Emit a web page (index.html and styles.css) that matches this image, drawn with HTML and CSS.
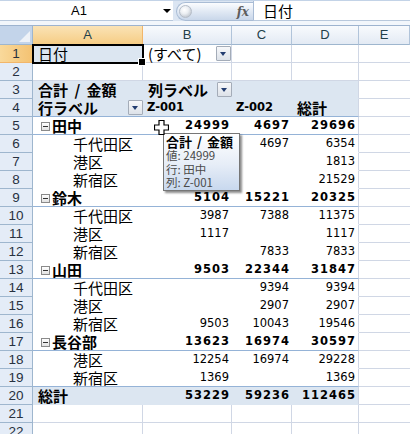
FILE: index.html
```html
<!DOCTYPE html>
<html lang="ja">
<head>
<meta charset="utf-8">
<title>Pivot</title>
<link rel="stylesheet" href="styles.css">
</head>
<body>
<div class="fbar">
  <div class="namebox"><span class="nb-text">A1</span><span class="nb-arrow"></span></div>
  <div class="pill"><span class="knob"></span><span class="fx">fx</span></div>
  <div class="formula">日付</div>
</div>
<div class="fstrip"></div>
<div class="sheet">
  <div class="row hdr">
    <div class="corner"><span class="tri"></span></div>
    <div class="ch sel">A</div><div class="ch">B</div><div class="ch">C</div><div class="ch">D</div><div class="ch">E</div>
  </div>
  <div class="row">
    <div class="rh sel">1</div>
    <div class="g t page a1">日付</div>
    <div class="g t fl">(すべて)<span class="dd"></span></div>
    <div class="g"></div><div class="g"></div><div class="g e"></div>
  </div>
  <div class="row">
    <div class="rh">2</div>
    <div class="g"></div><div class="g"></div><div class="g"></div><div class="g"></div><div class="g e"></div>
  </div>
  <div class="row band">
    <div class="rh">3</div>
    <div class="pv t b ws">合計 / 金額</div>
    <div class="pv t b fl">列ラベル<span class="dd"></span></div>
    <div class="pv"></div><div class="pd"></div><div class="g e"></div>
  </div>
  <div class="row band gl">
    <div class="rh">4</div>
    <div class="pv t b fl">行ラベル<span class="dd"></span></div>
    <div class="pv t b lat">Z-001</div>
    <div class="pv t b lat">Z-002</div>
    <div class="pd t b">総計</div>
    <div class="g e"></div>
  </div>
  <div class="row gl">
    <div class="rh">5</div>
    <div class="pv grp b"><span class="tog"></span>田中</div>
    <div class="pv n b">24999</div><div class="pv n b">4697</div><div class="pd n b">29696</div><div class="g e"></div>
  </div>
  <div class="row">
    <div class="rh">6</div>
    <div class="pv sub">千代田区</div>
    <div class="pv n"></div><div class="pv n">4697</div><div class="pd n">6354</div><div class="g e"></div>
  </div>
  <div class="row">
    <div class="rh">7</div>
    <div class="pv sub">港区</div>
    <div class="pv n"></div><div class="pv n"></div><div class="pd n">1813</div><div class="g e"></div>
  </div>
  <div class="row">
    <div class="rh">8</div>
    <div class="pv sub">新宿区</div>
    <div class="pv n"></div><div class="pv n"></div><div class="pd n">21529</div><div class="g e"></div>
  </div>
  <div class="row gl">
    <div class="rh">9</div>
    <div class="pv grp b"><span class="tog"></span>鈴木</div>
    <div class="pv n b">5104</div><div class="pv n b">15221</div><div class="pd n b">20325</div><div class="g e"></div>
  </div>
  <div class="row">
    <div class="rh">10</div>
    <div class="pv sub">千代田区</div>
    <div class="pv n">3987</div><div class="pv n">7388</div><div class="pd n">11375</div><div class="g e"></div>
  </div>
  <div class="row">
    <div class="rh">11</div>
    <div class="pv sub">港区</div>
    <div class="pv n">1117</div><div class="pv n"></div><div class="pd n">1117</div><div class="g e"></div>
  </div>
  <div class="row">
    <div class="rh">12</div>
    <div class="pv sub">新宿区</div>
    <div class="pv n"></div><div class="pv n">7833</div><div class="pd n">7833</div><div class="g e"></div>
  </div>
  <div class="row gl">
    <div class="rh">13</div>
    <div class="pv grp b"><span class="tog"></span>山田</div>
    <div class="pv n b">9503</div><div class="pv n b">22344</div><div class="pd n b">31847</div><div class="g e"></div>
  </div>
  <div class="row">
    <div class="rh">14</div>
    <div class="pv sub">千代田区</div>
    <div class="pv n"></div><div class="pv n">9394</div><div class="pd n">9394</div><div class="g e"></div>
  </div>
  <div class="row">
    <div class="rh">15</div>
    <div class="pv sub">港区</div>
    <div class="pv n"></div><div class="pv n">2907</div><div class="pd n">2907</div><div class="g e"></div>
  </div>
  <div class="row">
    <div class="rh">16</div>
    <div class="pv sub">新宿区</div>
    <div class="pv n">9503</div><div class="pv n">10043</div><div class="pd n">19546</div><div class="g e"></div>
  </div>
  <div class="row gl">
    <div class="rh">17</div>
    <div class="pv grp b"><span class="tog"></span>長谷部</div>
    <div class="pv n b">13623</div><div class="pv n b">16974</div><div class="pd n b">30597</div><div class="g e"></div>
  </div>
  <div class="row">
    <div class="rh">18</div>
    <div class="pv sub">港区</div>
    <div class="pv n">12254</div><div class="pv n">16974</div><div class="pd n">29228</div><div class="g e"></div>
  </div>
  <div class="row gl">
    <div class="rh">19</div>
    <div class="pv sub">新宿区</div>
    <div class="pv n">1369</div><div class="pv n"></div><div class="pd n">1369</div><div class="g e"></div>
  </div>
  <div class="row band">
    <div class="rh">20</div>
    <div class="pv t b">総計</div>
    <div class="pv n b">53229</div><div class="pv n b">59236</div><div class="pd n b">112465</div><div class="g e"></div>
  </div>
  <div class="row">
    <div class="rh">21</div>
    <div class="g"></div><div class="g"></div><div class="g"></div><div class="g"></div><div class="g e"></div>
  </div>
  <div class="row">
    <div class="rh">22</div>
    <div class="g"></div><div class="g"></div><div class="g"></div><div class="g"></div><div class="g e"></div>
  </div>
</div>

<div class="tip">
  <div class="tip-title">合計 / 金額</div>
  <div class="tip-line">値: 24999</div>
  <div class="tip-line">行: 田中</div>
  <div class="tip-line">列: Z-001</div>
</div>

<svg class="cursor" width="15" height="15" viewBox="0 0 15 15">
  <polygon points="5,0.5 10,0.5 10,5 14.5,5 14.5,10 10,10 10,14.5 5,14.5 5,10 0.5,10 0.5,5 5,5" fill="#fff" stroke="#000" stroke-width="1.2"/>
</svg>
</body>
</html>
```

FILE: styles.css
```css
* { box-sizing: border-box; margin: 0; padding: 0; }
html, body { width: 410px; height: 434px; overflow: hidden; background: #fff; }
body { position: relative; font-family: "Noto Sans CJK JP", sans-serif; color: #000; }

/* formula bar */
.fbar {
  height: 21px;
  display: flex;
  align-items: stretch;
  background: #dbe5f2;
  border-top: 1px solid #c3d3e7;
}
.namebox {
  width: 173px;
  background: #fff;
  border-bottom: 1px solid #b8c8dc;
  display: flex;
  align-items: center;
}
.nb-text { width: 158px; text-align: center; font: 13px/1 "Liberation Sans", sans-serif; }
.nb-arrow {
  width: 0; height: 0; margin-left: 5px;
  border-left: 4px solid transparent;
  border-right: 4px solid transparent;
  border-top: 4px solid #000;
}
.pill {
  margin-left: 3px;
  width: 77px;
  margin-top: 1px;
  border: 1px solid #a9bcd5;
  border-right: none;
  border-radius: 10px 0 0 10px;
  background: linear-gradient(#fbfcfe, #e1e9f4 50%, #c9d7ea);
  display: flex;
  align-items: center;
  padding-left: 2px;
}
.knob {
  width: 13px; height: 13px; border-radius: 50%;
  background: radial-gradient(circle at 40% 35%, #ffffff 0, #eceff3 40%, #aab2bd 100%);
  border: 1px solid #b5bdc8;
}
.fx { margin-left: auto; margin-right: 4px; font: italic bold 12px/1 "DejaVu Serif", serif; color: #5d5d5d; }
.formula {
  flex: 1;
  background: #fff;
  border-left: 1px solid #a9bcd5;
  border-bottom: 1px solid #b8c8dc;
  font-size: 15px;
  line-height: 19px;
  padding-left: 9px;
}
.fstrip { height: 5px; background: #f2f6fb; border-bottom: 1px solid #9db3cf; }

/* sheet */
.row {
  display: grid;
  grid-template-columns: 33px 110px 89px 60px 67px 51px;
  height: 18px;
}
.row.hdr { height: 19px; }
.row > div { white-space: nowrap; font-size: 15px; line-height: 17px; }

.corner {
  background: #c3d4ea;
  border-right: 1px solid #9eb6ce;
  border-bottom: 1px solid #9eb6ce;
  position: relative;
}
.tri {
  position: absolute; right: 2px; bottom: 2px;
  width: 0; height: 0;
  border-left: 11px solid transparent;
  border-bottom: 11px solid #eef2f8;
}
.ch {
  background: linear-gradient(#f8fafd, #e3eaf4);
  border-right: 1px solid #b1c4da;
  border-bottom: 1px solid #9eb6ce;
  text-align: center;
  font: 13px/18px "Liberation Sans", sans-serif !important;
  color: #233f4a;
}
.ch.sel { background: linear-gradient(#fae3b6, #f6cd85); border-bottom-color: #f29436; border-right-color: #f2b66a; }
.rh {
  background: #e4ecf7;
  border-right: 1px solid #9eb6ce;
  border-bottom: 1px solid #9eb6ce;
  text-align: center;
  font: 13.5px/17px "Liberation Sans", sans-serif !important;
  color: #27313f;
}
.rh.sel { background: linear-gradient(90deg, #f9d99b, #f4c272); border-right-color: #f29436; border-bottom-color: #f2b66a; }

.g { border-right: 1px solid #d0d7e5; border-bottom: 1px solid #d0d7e5; }
.g.e { border-right: none; }
.pv { border-bottom: 1px solid transparent; }
.pd { border-bottom: 1px solid transparent; border-right: 1px solid #d0d7e5; }
.band .pv, .band .pd, .page { background: #dce6f1; }
.gl .pv, .gl .pd { border-bottom-color: #95b3d7; }

.t { padding-left: 5px; }
.b { font-weight: bold; }
.ws { word-spacing: 3px; }
.fl { display: flex; align-items: center; }
.lat { font: bold 11.5px/17px "DejaVu Sans", sans-serif !important; padding-left: 4px; }
.n {
  text-align: right;
  padding-right: 3px;
  font: 11.5px/17px "DejaVu Sans", sans-serif !important;
}
.n.b { font-weight: bold !important; letter-spacing: 1px; padding-right: 2px; }
.grp { padding-left: 8px; display: flex; align-items: center; }
.sub { padding-left: 40px; }
.tog {
  width: 9px; height: 9px; margin-right: 2px; margin-top: 2px;
  border: 1px solid #8a8a8a;
  background: linear-gradient(#ffffff, #e2e2e2) content-box;
  position: relative;
}
.tog::after {
  content: ""; position: absolute; left: 1px; right: 1px; top: 3px; height: 1px; background: #333;
}
.dd {
  margin-left: auto;
  margin-right: 0;
  width: 15px; height: 15px;
  border: 1px solid #a4acb8;
  border-radius: 1px;
  background: linear-gradient(#f7f8fa, #dde2e9);
  position: relative;
  flex: none;
}
.dd::after {
  content: ""; position: absolute; left: 3px; top: 5px;
  width: 0; height: 0;
  border-left: 3.5px solid transparent;
  border-right: 3.5px solid transparent;
  border-top: 4px solid #233d70;
}

/* active cell */
.a1 { position: relative; }
.a1::before {
  content: ""; position: absolute; left: -1px; top: -1px; right: -2px; bottom: -2px;
  border: 2px solid #000;
}
.a1::after {
  content: ""; position: absolute; right: -4px; bottom: -4px;
  width: 6px; height: 6px; background: #000; border: 1px solid #fff;
}

/* tooltip */
.tip {
  position: absolute; left: 163px; top: 133px;
  width: 77px; height: 58px;
  border: 1px solid #767676;
  background: linear-gradient(#ffffff, #e6edf7 55%, #c8d8ee);
  box-shadow: 2px 2px 2px rgba(0, 0, 0, 0.45);
  padding: 1px 0 0 2px;
}
.tip-title { font-size: 13px; font-weight: bold; line-height: 14px; color: #000; white-space: nowrap; word-spacing: 2px; }
.tip-line { font-size: 11.5px; line-height: 13.5px; color: #4a4a4a; white-space: nowrap; }

.cursor { position: absolute; left: 154px; top: 120px; }
```
